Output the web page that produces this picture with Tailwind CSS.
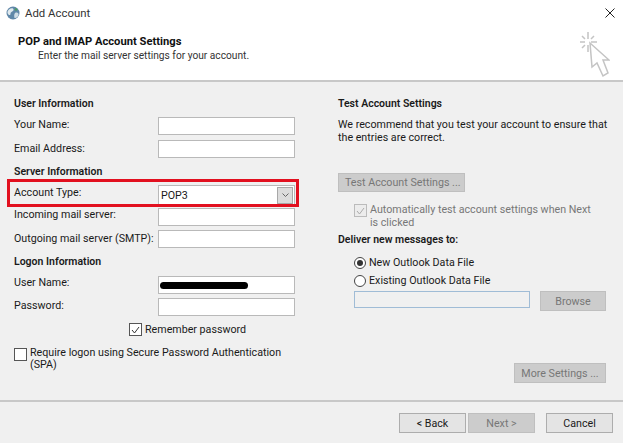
<!DOCTYPE html>
<html lang="en">
<head>
  <meta charset="UTF-8">
  <title>Add Account</title>
  <script src="https://cdn.jsdelivr.net/npm/@tailwindcss/browser@4"></script>
</head>
<body class="bg-white overflow-hidden font-['Roboto','Noto_Sans',sans-serif] text-[10.7px] leading-[13px] text-[#1a1a1a]">
  <div class="relative w-[623px] h-[443px] flex flex-col">
    <!-- Title bar -->
    <div class="h-[25px] flex items-center pl-[6px] pr-[8px]">
      <svg class="w-[14px] h-[14px]" viewBox="0 0 14 14">
        <circle cx="7" cy="7" r="6.5" fill="#5f87a8"/>
        <path d="M3 3.5 C5 1.5 8 2 7.5 4 C7 6 4.5 5.5 4.5 8 C4.5 10 2 9 1.5 7 C1.3 5.5 2 4.5 3 3.5Z" fill="#dfe9ee"/>
        <path d="M9 7 C11 6 13 7 12.5 9 C12 11 10 12.5 8.5 12 C8 10 8 8 9 7Z" fill="#cfdde6"/>
        <circle cx="10" cy="3.5" r="1.2" fill="#4f9e5f"/>
      </svg>
      <span class="ml-[5px] mt-[2px] text-[11.4px] text-[#333]">Add Account</span>
      <svg class="ml-auto w-[10px] h-[10px]" viewBox="0 0 10 10"><path d="M0.5 0.5 L9.5 9.5 M9.5 0.5 L0.5 9.5" stroke="#222" stroke-width="1"/></svg>
    </div>

    <!-- Header -->
    <div class="h-[55px] pl-[18px] pt-[10px] flex justify-between">
      <div>
        <div class="font-bold text-[11.2px] leading-[14px] text-[#111]">POP and IMAP Account Settings</div>
        <div class="pl-[20px] text-[10.2px] leading-[14px] text-[#333]">Enter the mail server settings for your account.</div>
      </div>
      <svg class="w-[32px] h-[48px] mr-[13px] -mt-[5px]" viewBox="0 0 32 48" fill="none" stroke="#c4c4c4">
        <path d="M10 2 V9 M10 15 V22 M2 12 H7 M13 12 H19 M4 6 L7 9 M16 6 L13 9 M4 18 L7 15" stroke-width="1.5"/>
        <path d="M12 13 L14 37 L19 33 L25 46 L30 43 L25 30 L31 30 Z" fill="#fff" stroke-width="1.5"/>
      </svg>
    </div>

    <!-- Body -->
    <div class="h-[320px] bg-[#f0f0f0] border-t-2 border-[#c8c8c8] grid grid-cols-[324px_1fr] pl-[14px]">
      <!-- Left column -->
      <div class="pt-[15px] flex flex-col">
        <div class="font-semibold text-[10.5px] h-[13px]">User Information</div>
        <div class="mt-[2px] flex flex-col">
          <div class="h-[23px] flex items-end"><span class="w-[144px] pb-[4px]">Your Name:</span><div class="w-[137px] h-[18px] bg-white border border-[#b9b9b9]"></div></div>
          <div class="h-[23px] flex items-end"><span class="w-[144px] pb-[3px]">Email Address:</span><div class="w-[137px] h-[18px] bg-white border border-[#b9b9b9]"></div></div>
        </div>
        <div class="mt-[7px] font-semibold text-[10.5px] h-[13px]">Server Information</div>
        <div class="mt-[7px] flex flex-col">
          <div class="h-[20px] flex items-end"><span class="w-[144px] pb-[6px]">Account Type:</span>
            <div class="w-[137px] h-[20px] bg-white border border-[#b9b9b9] flex items-center justify-between pl-[2px]">
              <span>POP3</span>
              <span class="w-[16px] h-[17px] mr-px bg-[#dcdcdc] border border-[#a8a8a8] flex items-center justify-center">
                <svg class="w-[7px] h-[4px]" viewBox="0 0 7 4" fill="none"><path d="M0.5 0.5 L3.5 3.5 L6.5 0.5" stroke="#666"/></svg>
              </span>
            </div>
          </div>
          <div class="h-[21px] flex items-end"><span class="w-[144px] pb-[5px]">Incoming mail server:</span><div class="w-[137px] h-[18px] bg-white border border-[#b9b9b9]"></div></div>
          <div class="h-[22px] flex items-end"><span class="w-[144px] pb-[3px]">Outgoing mail server (SMTP):</span><div class="w-[137px] h-[18px] bg-white border border-[#b9b9b9]"></div></div>
        </div>
        <div class="mt-[7px] font-semibold text-[10.5px] h-[13px]">Logon Information</div>
        <div class="mt-[8px] flex flex-col">
          <div class="h-[18px] flex items-end"><span class="w-[144px] pb-[5px]">User Name:</span>
            <div class="w-[137px] h-[18px] bg-white border border-[#b9b9b9] flex items-center pl-px"><div class="w-[88px] h-[7px] rounded-full bg-black"></div></div>
          </div>
          <div class="h-[22px] flex items-end"><span class="w-[144px] pb-[4px]">Password:</span><div class="w-[137px] h-[18px] bg-white border border-[#b9b9b9]"></div></div>
        </div>
        <div class="mt-[7px] ml-[115px] flex items-center gap-[3px] h-[13px]">
          <span class="w-[13px] h-[13px] bg-white border border-[#555] flex items-center justify-center">
            <svg class="w-[9px] h-[8px]" viewBox="0 0 9 8" fill="none"><path d="M1 4 L3.5 7 L8 1" stroke="#333"/></svg>
          </span>
          <span>Remember password</span>
        </div>
        <div class="mt-[11px] flex gap-[3px] w-[285px]">
          <span class="shrink-0 mt-[1px] w-[13px] h-[13px] bg-white border border-[#555]"></span>
          <span class="leading-[12px]">Require logon using Secure Password Authentication (SPA)</span>
        </div>
      </div>

      <!-- Right column -->
      <div class="pt-[15px] flex flex-col w-[285px] relative">
        <div class="font-semibold text-[10.5px] h-[13px]">Test Account Settings</div>
        <p class="mt-[8px] w-[276px]">We recommend that you test your account to ensure that the entries are correct.</p>
        <button class="mt-[29px] w-[127px] h-[19px] bg-[#cccccc] border border-[#bfbfbf] text-[#777] text-left pl-[6px]">Test Account Settings ...</button>
        <div class="mt-[11px] ml-[16px] flex gap-[3px] w-[238px] text-[#777]">
          <span class="shrink-0 mt-[1px] w-[13px] h-[13px] border border-[#bbb] bg-[#ececec] flex items-center justify-center">
            <svg class="w-[9px] h-[8px]" viewBox="0 0 9 8" fill="none"><path d="M1 4 L3.5 7 L8 1" stroke="#aaa"/></svg>
          </span>
          <span>Automatically test account settings when Next is clicked</span>
        </div>
        <div class="mt-[4px] font-semibold text-[10.5px] h-[13px]">Deliver new messages to:</div>
        <div class="mt-[10px] ml-[16px] flex items-center gap-[3px] h-[13px]">
          <span class="w-[12px] h-[12px] rounded-full bg-white border border-[#444] flex items-center justify-center"><span class="w-[6px] h-[6px] rounded-full bg-[#333]"></span></span>
          <span>New Outlook Data File</span>
        </div>
        <div class="mt-[5px] ml-[16px] flex items-center gap-[3px] h-[13px]">
          <span class="w-[12px] h-[12px] rounded-full bg-white border border-[#444]"></span>
          <span>Existing Outlook Data File</span>
        </div>
        <div class="mt-[4px] ml-[16px] flex items-start gap-[10px]">
          <div class="w-[176px] h-[17px] bg-[#f0f0f0] border border-[#a0bcd6]"></div>
          <button class="w-[66px] h-[20px] bg-[#cccccc] border border-[#bfbfbf] text-[#777]">Browse</button>
        </div>
        <button class="mt-[52px] ml-[176px] w-[92px] h-[20px] bg-[#cccccc] border border-[#bfbfbf] text-[#777]">More Settings ...</button>
      </div>
    </div>

    <!-- Footer -->
    <div class="h-[43px] bg-[#f0f0f0] border-t-2 border-[#c8c8c8] pt-[11px] flex pl-[399px]">
      <button class="w-[67px] h-[20px] bg-[#e4e4e4] border border-[#adadad]">&lt; Back</button>
      <button class="ml-[2px] w-[67px] h-[20px] bg-[#cccccc] border border-[#bfbfbf] text-[#777]">Next &gt;</button>
      <button class="ml-[11px] w-[67px] h-[20px] bg-[#e4e4e4] border border-[#adadad]">Cancel</button>
    </div>

    <!-- Red highlight drawn over the Account Type row -->
    <div class="absolute left-[7px] top-[179px] w-[292px] h-[28px] border-[3px] border-[#e2101f]"></div>
  </div>
</body>
</html>
